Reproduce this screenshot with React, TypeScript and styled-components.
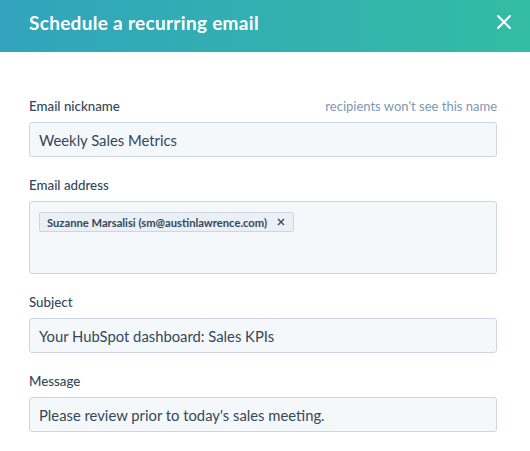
import React from "react";
import styled, { createGlobalStyle } from "styled-components";

const Global = createGlobalStyle`
  html, body { margin: 0; padding: 0; background: #ffffff; }
  body { font-family: Lato, "Open Sans", sans-serif; -webkit-font-smoothing: antialiased; }
  * { box-sizing: border-box; }
`;

const Dialog = styled.div`
  width: 530px;
  height: 451px;
  background: #ffffff;
  display: flex;
  flex-direction: column;
`;

const Header = styled.header`
  height: 52px;
  flex: none;
  background: linear-gradient(to right, #31a4bd, #33bca4);
  display: flex;
  align-items: flex-start;
  justify-content: space-between;
  padding: 9px 18px 0 29px;
`;

const Title = styled.h1`
  margin: 0;
  color: #ffffff;
  font-family: Lato, sans-serif;
  font-weight: 700;
  font-size: 19px;
  line-height: 27px;
  letter-spacing: 0.3px;
`;

const CloseButton = styled.button`
  border: 0;
  background: transparent;
  padding: 0;
  margin-top: 5px;
  width: 16px;
  height: 16px;
  display: flex;
  align-items: center;
  justify-content: center;
  cursor: pointer;
`;

const Body = styled.div`
  padding: 44px 33px 0 29px;
  display: flex;
  flex-direction: column;
  gap: 18px;
`;

const Field = styled.div`
  display: flex;
  flex-direction: column;
  gap: 6px;
`;

const LabelRow = styled.div`
  display: flex;
  justify-content: space-between;
  align-items: center;
  height: 20px;
`;

const Label = styled.label`
  font-size: 13.3px;
  color: #33475b;
  font-weight: 500;
`;

const Hint = styled.span`
  font-size: 13px;
  color: #7c98b6;
`;

const Input = styled.div<{ $tall?: boolean }>`
  background: #f5f8fa;
  border: 1px solid #cbd6e2;
  border-radius: 3px;
  height: ${(p) => (p.$tall ? "73px" : "35px")};
  padding: ${(p) => (p.$tall ? "10px 9px" : "0 9px")};
  display: flex;
  align-items: ${(p) => (p.$tall ? "flex-start" : "center")};
  font-size: 14.8px;
  color: #33475b;
`;

const Chip = styled.span`
  display: inline-flex;
  align-items: center;
  gap: 10px;
  height: 20px;
  padding: 0 8px 0 7px;
  background: #eaf0f6;
  border: 1px solid #cbd6e2;
  border-radius: 2px;
  font-size: 11.2px;
  font-weight: 700;
  color: #33475b;
`;

const ChipClose = styled.span`
  display: inline-flex;
  width: 8px;
  height: 8px;
`;

export default function App() {
  return (
    <>
      <Global />
      <Dialog>
        <Header>
          <Title>Schedule a recurring email</Title>
          <CloseButton aria-label="Close">
            <svg width="14" height="14" viewBox="0 0 14 14">
              <path d="M1 1L13 13M13 1L1 13" stroke="#ffffff" strokeWidth="2" strokeLinecap="round" />
            </svg>
          </CloseButton>
        </Header>
        <Body>
          <Field>
            <LabelRow>
              <Label>Email nickname</Label>
              <Hint>recipients won't see this name</Hint>
            </LabelRow>
            <Input>Weekly Sales Metrics</Input>
          </Field>
          <Field>
            <LabelRow>
              <Label>Email address</Label>
            </LabelRow>
            <Input $tall>
              <Chip>
                Suzanne Marsalisi (sm@austinlawrence.com)
                <ChipClose>
                  <svg width="8" height="8" viewBox="0 0 8 8">
                    <path d="M1 1L7 7M7 1L1 7" stroke="#33475b" strokeWidth="1.3" />
                  </svg>
                </ChipClose>
              </Chip>
            </Input>
          </Field>
          <Field>
            <LabelRow>
              <Label>Subject</Label>
            </LabelRow>
            <Input>Your HubSpot dashboard: Sales KPIs</Input>
          </Field>
          <Field>
            <LabelRow>
              <Label>Message</Label>
            </LabelRow>
            <Input>Please review prior to today's sales meeting.</Input>
          </Field>
        </Body>
      </Dialog>
    </>
  );
}
